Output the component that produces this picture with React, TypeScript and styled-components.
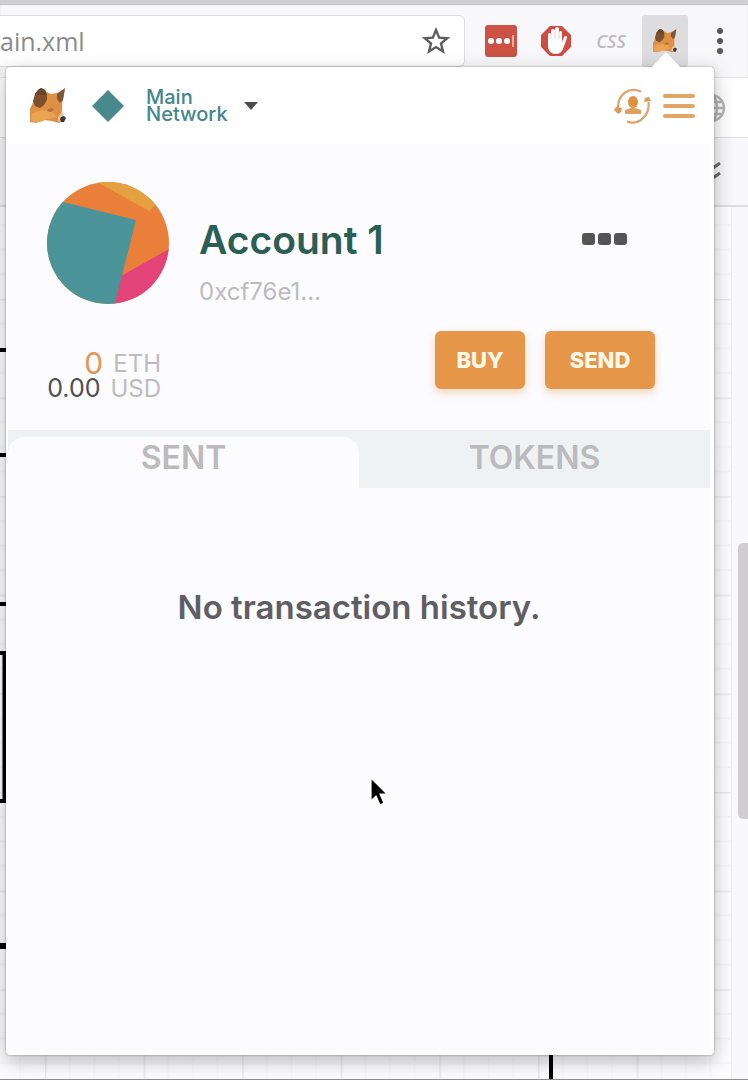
import React, { useState } from "react";
import styled, { createGlobalStyle } from "styled-components";

const GlobalStyle = createGlobalStyle`
  * { box-sizing: border-box; }
  body { margin: 0; background: #f9f9fb; font-family: Inter, "Open Sans", sans-serif; }
  button { border: 0; padding: 0; margin: 0; background: none; font: inherit; color: inherit; cursor: pointer; }
  svg { display: block; }
`;

const Browser = styled.div`
  position: relative;
  display: flex;
  flex-direction: column;
  min-height: 100vh;
  overflow: hidden;
  border-bottom: 1px solid #8b8b8d;
`;

const Toolbar = styled.header`
  display: flex;
  align-items: flex-start;
  height: 78px;
  padding-top: 11px;
  background: #f8f8fa;
  border-top: 4px solid #d0d0d0;
  border-bottom: 1px solid #e6e6e9;
  box-shadow: inset 0 1px 1px #bdbdbf;
`;

const AddressBar = styled.form`
  display: flex;
  flex: 1;
  min-width: 0;
  height: 52px;
  align-items: center;
  padding-right: 14px;
  background: #fff;
  border: 1px solid #dcdcde;
  border-left: 0;
  border-radius: 0 6px 6px 0;
`;

const AddressInput = styled.input`
  flex: 1;
  min-width: 0;
  padding: 0;
  border: 0;
  outline: 0;
  background: none;
  color: #8a8a8c;
  font: 25px/32px "Open Sans", sans-serif;
`;

const Extensions = styled.nav`
  display: flex;
  align-items: center;
  padding-left: 12px;
`;

const ExtensionButton = styled.button<{ $active?: boolean }>`
  display: flex;
  align-items: center;
  justify-content: center;
  width: ${(p) => (p.$active ? 46 : 48)}px;
  height: 52px;
  margin-right: ${(p) => (p.$active ? 4 : 7)}px;
  border-radius: 3px;
  background: ${(p) => (p.$active ? "#dddcde" : "none")};
`;

const CssLabel = styled.span`
  font: italic 600 18px/24px "Open Sans", sans-serif;
  color: #bdbdbf;
`;

const MenuDots = styled.button`
  display: flex;
  width: 56px;
  height: 52px;
  align-items: center;
  justify-content: center;
`;

const TitleStrip = styled.div`
  display: flex;
  justify-content: flex-end;
  align-items: center;
  height: 60px;
  padding-right: 22px;
  background: #fff;
  border-bottom: 1px solid #dededf;
`;

const ToolStrip = styled.div`
  display: flex;
  justify-content: flex-end;
  align-items: center;
  height: 69px;
  padding-right: 27px;
  background: #f8f8fb;
  border-bottom: 2px solid #dfdfe1;
`;

const Workspace = styled.div`
  display: flex;
  flex: 1;
`;

const Canvas = styled.div`
  flex: 1;
  background: #fdfcfe;
  border-right: 1px solid #f0f0f3;
  svg { width: 100%; height: 100%; }
`;

const SidePanel = styled.div`
  display: flex;
  justify-content: flex-end;
  width: 16px;
  padding-top: 336px;
  background: #f9f9fb;
`;

const ScrollThumb = styled.div`
  width: 10px;
  height: 276px;
  border-radius: 5px 0 0 5px;
  background: #cfcdd0;
`;

const Popup = styled.section`
  position: absolute;
  top: 67px;
  right: 34px;
  bottom: 24px;
  left: 6px;
  display: flex;
  flex-direction: column;
  background: #fff;
  border-radius: 4px;
  box-shadow: 0 0 2px rgba(0, 0, 0, 0.4), 0 6px 20px rgba(0, 0, 0, 0.28);
`;

const PopupArrow = styled.div`
  position: absolute;
  top: -15px;
  right: 33px;
  width: 30px;
  height: 16px;
  background: #fff;
  clip-path: polygon(50% 0, 100% 100%, 0 100%);
`;

const PopupHeader = styled.header`
  display: flex;
  align-items: center;
  height: 77px;
  padding: 0 19px 0 24px;
`;

const NetworkButton = styled.button`
  display: flex;
  align-items: center;
  gap: 21px;
  margin-left: 25px;
  text-align: left;
`;

const NetworkName = styled.span`
  width: 84px;
  margin-right: -7px;
  color: #42878b;
  font-size: 20px;
  font-weight: 500;
  line-height: 17px;
`;

const HeaderActions = styled.div`
  display: flex;
  align-items: center;
  gap: 11px;
  margin-left: auto;
`;

const Bars = styled.span`
  display: grid;
  gap: 6px;
  width: 32px;
  i { height: 4px; border-radius: 2px; background: #e2a566; }
`;

const Body = styled.main`
  flex: 1;
  margin: 0 4px 4px 2px;
  background: #fcfbfe;
`;

const Account = styled.div`
  display: flex;
  height: 160px;
  padding: 38px 83px 0 39px;
`;

const AccountText = styled.div`
  flex: 1;
  padding: 36px 0 0 30px;
`;

const AccountName = styled.h1`
  margin: 0;
  color: #2b5e55;
  font-size: 39px;
  font-weight: 600;
  line-height: 44px;
`;

const AccountAddress = styled.p`
  margin: 14px 0 0;
  color: #bcbbbe;
  font-size: 24px;
  line-height: 32px;
`;

const MoreButton = styled.button`
  display: flex;
  align-self: flex-start;
  gap: 3px;
  margin-top: 51px;
  i { width: 13px; height: 12px; border-radius: 3px; background: #555457; }
`;

const Funds = styled.div`
  display: flex;
  align-items: flex-start;
  justify-content: space-between;
  height: 126px;
  padding: 27px 55px 0 37px;
`;

const Balance = styled.div`
  display: grid;
  justify-items: end;
  width: 116px;
  padding-top: 20px;
`;

const Amount = styled.div<{ $accent?: boolean }>`
  display: flex;
  align-items: center;
  gap: 10px;
  color: ${(p) => (p.$accent ? "#e39656" : "#4f4e52")};
  font-size: ${(p) => (p.$accent ? 30 : 25)}px;
  line-height: 25px;
  span { color: #bcbbbe; font-size: 24px; }
`;

const Actions = styled.div`
  display: flex;
  gap: 20px;
`;

const ActionButton = styled.button<{ $wide?: boolean }>`
  width: ${(p) => (p.$wide ? 110 : 90)}px;
  height: 58px;
  border-radius: 6px;
  background: #e69648;
  box-shadow: 0 4px 8px rgba(230, 150, 72, 0.35);
  color: #fff8ea;
  font-size: 22px;
  font-weight: 800;
`;

const Tabs = styled.div`
  display: flex;
  height: 58px;
  background: #f0f1f3;
`;

const Tab = styled.button<{ $selected: boolean }>`
  flex: 1;
  margin-top: 7px;
  padding-bottom: 10px;
  border-radius: 16px 16px 0 0;
  background: ${(p) => (p.$selected ? "#fcfbfe" : "transparent")};
  color: #bbbabd;
  font-size: 32px;
  font-weight: 600;
`;

const Empty = styled.p`
  margin: 99px 0 0;
  text-align: center;
  color: #5f5e64;
  font-size: 33px;
  font-weight: 600;
  line-height: 40px;
`;

const Pointer = styled.svg`
  position: absolute;
  top: 710px;
  left: 364px;
`;

function Fox({ size }: { size: number }) {
  return (
    <svg width={size} height={size} viewBox="0 0 36 36" aria-hidden="true">
      <path d="M4 12 15 3l6 3 6-1 8-4-2 10-1 6v8l2 7-5 3-7-2-8-1-8 3-6-1-3-3 1-7 3-5z" fill="#de9144" />
      <path d="M2 25 12 22 22 24 27 29 18 31 10 34 3 34 1 31z" fill="#eaa253" />
      <path d="M11 0 15 2 17 7 17 12 14 17 10 20 5 18 3 13 5 6 8 2z" fill="#80502c" />
      <path d="M11 0 15 2 17 7 12 7 5 6 8 2z" fill="#68452f" />
      <path d="M35 0 33 12 30 15 27 11 27 6z" fill="#79563c" />
      <path d="m18 21 4-1 2 2-3 2-4-1z" fill="#b3733c" />
      <path d="m28 29 3-4 1-3 2 8-1 4-5-1z" fill="#e9c59c" />
      <path d="m31 29 3-1 2 2-2 4h-3l-1-3z" fill="#3c3839" />
    </svg>
  );
}

function Diagram() {
  return (
    <svg aria-hidden="true">
      <defs>
        <pattern id="grid" x="45" y="-6.6" width="98.6" height="98.6" patternUnits="userSpaceOnUse">
          <path d="M24.6 0V98.6M49.3 0V98.6M74 0V98.6M0 24.6H98.6M0 49.3H98.6M0 74H98.6" stroke="#f7f6f9" strokeWidth="1.5" />
          <path d="M0 .75H98.6M.75 0V98.6" stroke="#ebeaed" strokeWidth="1.5" />
        </pattern>
      </defs>
      <rect width="100%" height="100%" fill="url(#grid)" />
      <g fill="none" stroke="#000" strokeWidth="4">
        <path d="M0 143H40M0 248H40M0 397H40M-20 446H4.500V594H-20M551 780V900" />
        <path d="M0 739H40" strokeWidth="6" />
      </g>
    </svg>
  );
}

export default function App() {
  const [tab, setTab] = useState("SENT");
  return (
    <>
      <GlobalStyle />
      <Browser>
        <Toolbar>
          <AddressBar onSubmit={(e) => e.preventDefault()}>
            <AddressInput aria-label="Address" defaultValue="ain.xml" />
            <svg width="28" height="28" viewBox="0 0 28 28" fill="none" stroke="#5d5d60" strokeWidth="2.400" role="img" aria-label="Bookmark">
              <path d="m14 3 3.100 7.600 8.200.6-6.300 5.200 2 8.100-7-4.400-7 4.400 2-8.100-6.300-5.200 8.200-.6z" />
            </svg>
          </AddressBar>
          <Extensions>
            <ExtensionButton aria-label="Password manager">
              <svg width="32" height="32" viewBox="0 0 32 32">
                <rect width="32" height="32" rx="3" fill="#cb5244" />
                <g fill="#fff">
                  <circle cx="6" cy="16" r="3" />
                  <circle cx="14" cy="16" r="3" />
                  <circle cx="22" cy="16" r="3" />
                </g>
                <path d="M28 10V22" stroke="#f3c3bd" strokeWidth="1.600" />
              </svg>
            </ExtensionButton>
            <ExtensionButton aria-label="Ad blocker">
              <svg width="32" height="32" viewBox="0 0 32 32">
                <path d="M10 1h12l9 9v12l-9 9H10l-9-9V10z" fill="#d04c43" />
                <path d="M8 9a1.700 1.700 0 0 1 3 0V6a1.700 1.700 0 0 1 4 0V4a1.700 1.700 0 0 1 4 0v3a1.700 1.700 0 0 1 3 0v10l2-5c1-2 4-1 3 1l-4 11c-1 3-4 5-7 5-6 0-8-4-8-8z" fill="#fff" />
                <path d="M11 8v6M15 6v8M19 7v7" stroke="#f0cfcc" strokeWidth="1" />
              </svg>
            </ExtensionButton>
            <ExtensionButton aria-label="CSS">
              <CssLabel>CSS</CssLabel>
            </ExtensionButton>
            <ExtensionButton $active aria-label="Wallet">
              <Fox size={24} />
            </ExtensionButton>
            <MenuDots aria-label="Menu">
              <svg width="8" height="28" viewBox="0 0 8 28" fill="#58585b">
                <circle cx="4" cy="4" r="3" />
                <circle cx="4" cy="14" r="3" />
                <circle cx="4" cy="24" r="3" />
              </svg>
            </MenuDots>
          </Extensions>
        </Toolbar>
        <TitleStrip>
          <svg width="30" height="30" viewBox="0 0 30 30" fill="none" stroke="#b5b5b7" strokeWidth="2.500" aria-hidden="true">
            <circle cx="15" cy="15" r="13" />
            <ellipse cx="15" cy="15" rx="6" ry="13" />
            <path d="M2 15H28M4 9H26M4 21H26" />
          </svg>
        </TitleStrip>
        <ToolStrip>
          <svg width="16" height="20" viewBox="0 0 16 20" fill="none" stroke="#6b6b6e" strokeWidth="3" aria-hidden="true">
            <path d="m2 1 6 5 7-5M2 11l6 5 7-5" />
          </svg>
        </ToolStrip>
        <Workspace>
          <Canvas>
            <Diagram />
          </Canvas>
          <SidePanel>
            <ScrollThumb />
          </SidePanel>
        </Workspace>

        <Popup>
          <PopupArrow />
          <PopupHeader>
            <Fox size={36} />
            <NetworkButton aria-haspopup="menu">
              <svg width="34" height="34" viewBox="0 0 34 34" aria-hidden="true">
                <path d="M17 1 33 17 17 33 1 17z" fill="#47898d" />
              </svg>
              <NetworkName>Main Network</NetworkName>
              <svg width="16" height="10" viewBox="0 0 16 10" aria-hidden="true">
                <path d="M0 1H14L7 9z" fill="#4b4b4d" />
              </svg>
            </NetworkButton>
            <HeaderActions>
              <button aria-label="Switch account">
                <svg width="38" height="38" viewBox="0 0 38 38" fill="none" stroke="#e2a063" strokeWidth="2.200">
                  <path d="M27 4.500C15-1 3 8 4 22M13 34.500C24 39 36 29 34.500 15" />
                  <path d="m0 23 2-3 6 1-1 4-3 2zM30 15l1-4 4-1 2 4z" fill="#e09a55" stroke="none" />
                  <ellipse cx="19" cy="15" rx="5" ry="6" fill="#e0913f" stroke="none" />
                  <path d="M17 19h4v2l6 2v4H11v-4l6-2z" fill="#e0a060" stroke="none" />
                </svg>
              </button>
              <button aria-label="Open menu">
                <Bars><i /><i /><i /></Bars>
              </button>
            </HeaderActions>
          </PopupHeader>
          <Body>
            <Account>
              <svg width="122" height="122" viewBox="0 0 122 122" role="img" aria-label="Account avatar">
                <clipPath id="avatar"><circle cx="61" cy="61" r="61" /></clipPath>
                <g clipPath="url(#avatar)">
                  <rect width="122" height="122" fill="#e97f38" />
                  <path d="M50 0 102 29 112 20 90-5z" fill="#e5a03f" />
                  <path d="M74 94 122 67V122H66z" fill="#e34379" />
                  <path d="M0 16 89 38 67 125H0z" fill="#4b959a" />
                </g>
              </svg>
              <AccountText>
                <AccountName>Account 1</AccountName>
                <AccountAddress>0xcf76e1...</AccountAddress>
              </AccountText>
              <MoreButton aria-label="Account options"><i /><i /><i /></MoreButton>
            </Account>
            <Funds>
              <Balance>
                <Amount $accent>0 <span>ETH</span></Amount>
                <Amount>0.00 <span>USD</span></Amount>
              </Balance>
              <Actions>
                <ActionButton>BUY</ActionButton>
                <ActionButton $wide>SEND</ActionButton>
              </Actions>
            </Funds>
            <Tabs role="tablist">
              {["SENT", "TOKENS"].map((name) => (
                <Tab key={name} role="tab" aria-selected={tab === name} $selected={tab === name} onClick={() => setTab(name)}>
                  {name}
                </Tab>
              ))}
            </Tabs>
            <Empty>No transaction history.</Empty>
          </Body>
          <Pointer width="20" height="30" viewBox="0 0 20 30" aria-hidden="true">
            <path d="M1 1V24L6 19 10 28 14 26 10 17H17z" fill="#000" stroke="#fff" strokeWidth="1.200" />
          </Pointer>
        </Popup>
      </Browser>
    </>
  );
}
